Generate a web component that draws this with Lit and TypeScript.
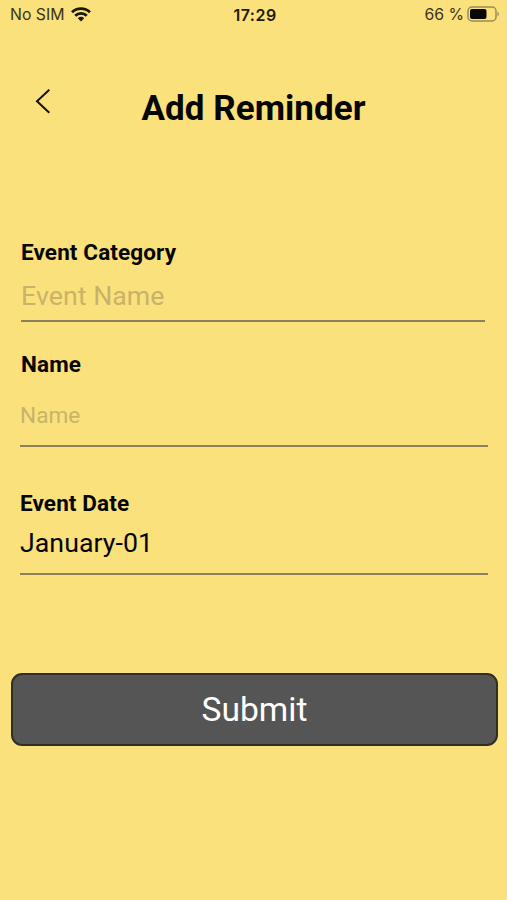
import { LitElement, html, css } from "lit";

class AppRoot extends LitElement {
  static styles = css`
    :host { display: flex; flex-direction: column; box-sizing: border-box; width: 507px; height: 900px; overflow: hidden; background: #fae17b; color: #050505; font-family: Roboto, sans-serif; }
    .status { height: 30px; display: grid; grid-template-columns: 1fr auto 1fr; align-items: center; padding: 0 7px 0 10px; box-sizing: border-box; font: 15.8px/30px Inter, sans-serif; color: #3a331c; }
    .left, .right { display: flex; align-items: center; }
    .left { gap: 7px; }
    .left svg { margin-top: -1px; }
    .right { justify-content: flex-end; gap: 3px; }
    .right svg { margin-top: -2px; }
    .time { font-weight: 600; font-size: 16px; letter-spacing: 0.5px; color: #1f1a0c; }
    .header { display: grid; grid-template-columns: 1fr auto 1fr; margin-top: 53px; height: 52px; align-items: center; padding: 0 34px; }
    .back { width: 18px; height: 28px; margin-top: -16px; }
    h1 { margin: 0; font-size: 35px; line-height: 52px; font-weight: 700; letter-spacing: 0.05px; white-space: nowrap; }
    .form { display: flex; flex-direction: column; margin-top: 102px; }
    .field { display: flex; flex-direction: column; box-sizing: border-box; border-bottom: 2px solid #8b815b; margin: 0 19px 0 20px; }
    .label { font-size: 22.5px; line-height: 30px; font-weight: 700; letter-spacing: 0.12px; white-space: nowrap; }
    .value { font-size: 26.7px; line-height: 36px; letter-spacing: 0.05px; white-space: nowrap; }
    .hint { color: #c9b36a; }
    .category { height: 85px; margin: 0 22px 0 21px; gap: 11px; }
    .name { height: 98px; margin-top: 27px; gap: 19px; }
    .name .label { padding-left: 1px; }
    .name .value { font-size: 22.6px; }
    .date { height: 87px; margin-top: 41px; gap: 7px; }
    .submit { box-sizing: border-box; height: 73px; margin: 98px 9px 0 11px; border: 2px solid #302e25; border-radius: 11px; background: #555; color: #fff; font: 33.6px/69px Roboto, sans-serif; padding: 0; }
  `;

  render() {
    return html`
      <div class="status">
        <div class="left"><span>No SIM</span>
          <svg width="20" height="15" viewBox="0 0 20 15"><g fill="none" stroke="#1b180e" stroke-width="2.8"><path d="M1 5.2a13 13 0 0 1 18 0"/><path d="M4.2 8.7a8.3 8.3 0 0 1 11.6 0"/></g><path d="M6.8 11.3a4.7 4.7 0 0 1 6.4 0L10 14.6z" fill="#1b180e"/></svg>
        </div>
        <span class="time">17:29</span>
        <div class="right"><span>66 %</span>
          <svg width="33" height="16" viewBox="0 0 33 16"><rect x="1" y="1" width="28" height="14" rx="4" fill="none" stroke="#9a8c55" stroke-width="1.5"/><rect x="3" y="3" width="16.5" height="10" rx="2" fill="#080805"/><path d="M30.5 5.5q3 2.5 0 5z" fill="#9a8c55"/></svg>
        </div>
      </div>
      <header class="header">
        <svg class="back" viewBox="0 0 18 28"><path d="M15.3 2.7 3 14.2l12.3 11.5" fill="none" stroke="#111" stroke-width="2"/></svg>
        <h1>Add Reminder</h1><span></span>
      </header>
      <div class="form">
        <div class="field category"><span class="label">Event Category</span><span class="value hint">Event Name</span></div>
        <div class="field name"><span class="label">Name</span><span class="value hint">Name</span></div>
        <div class="field date"><span class="label">Event Date</span><span class="value">January-01</span></div>
        <button class="submit">Submit</button>
      </div>`;
  }
}
customElements.define("app-root", AppRoot);
